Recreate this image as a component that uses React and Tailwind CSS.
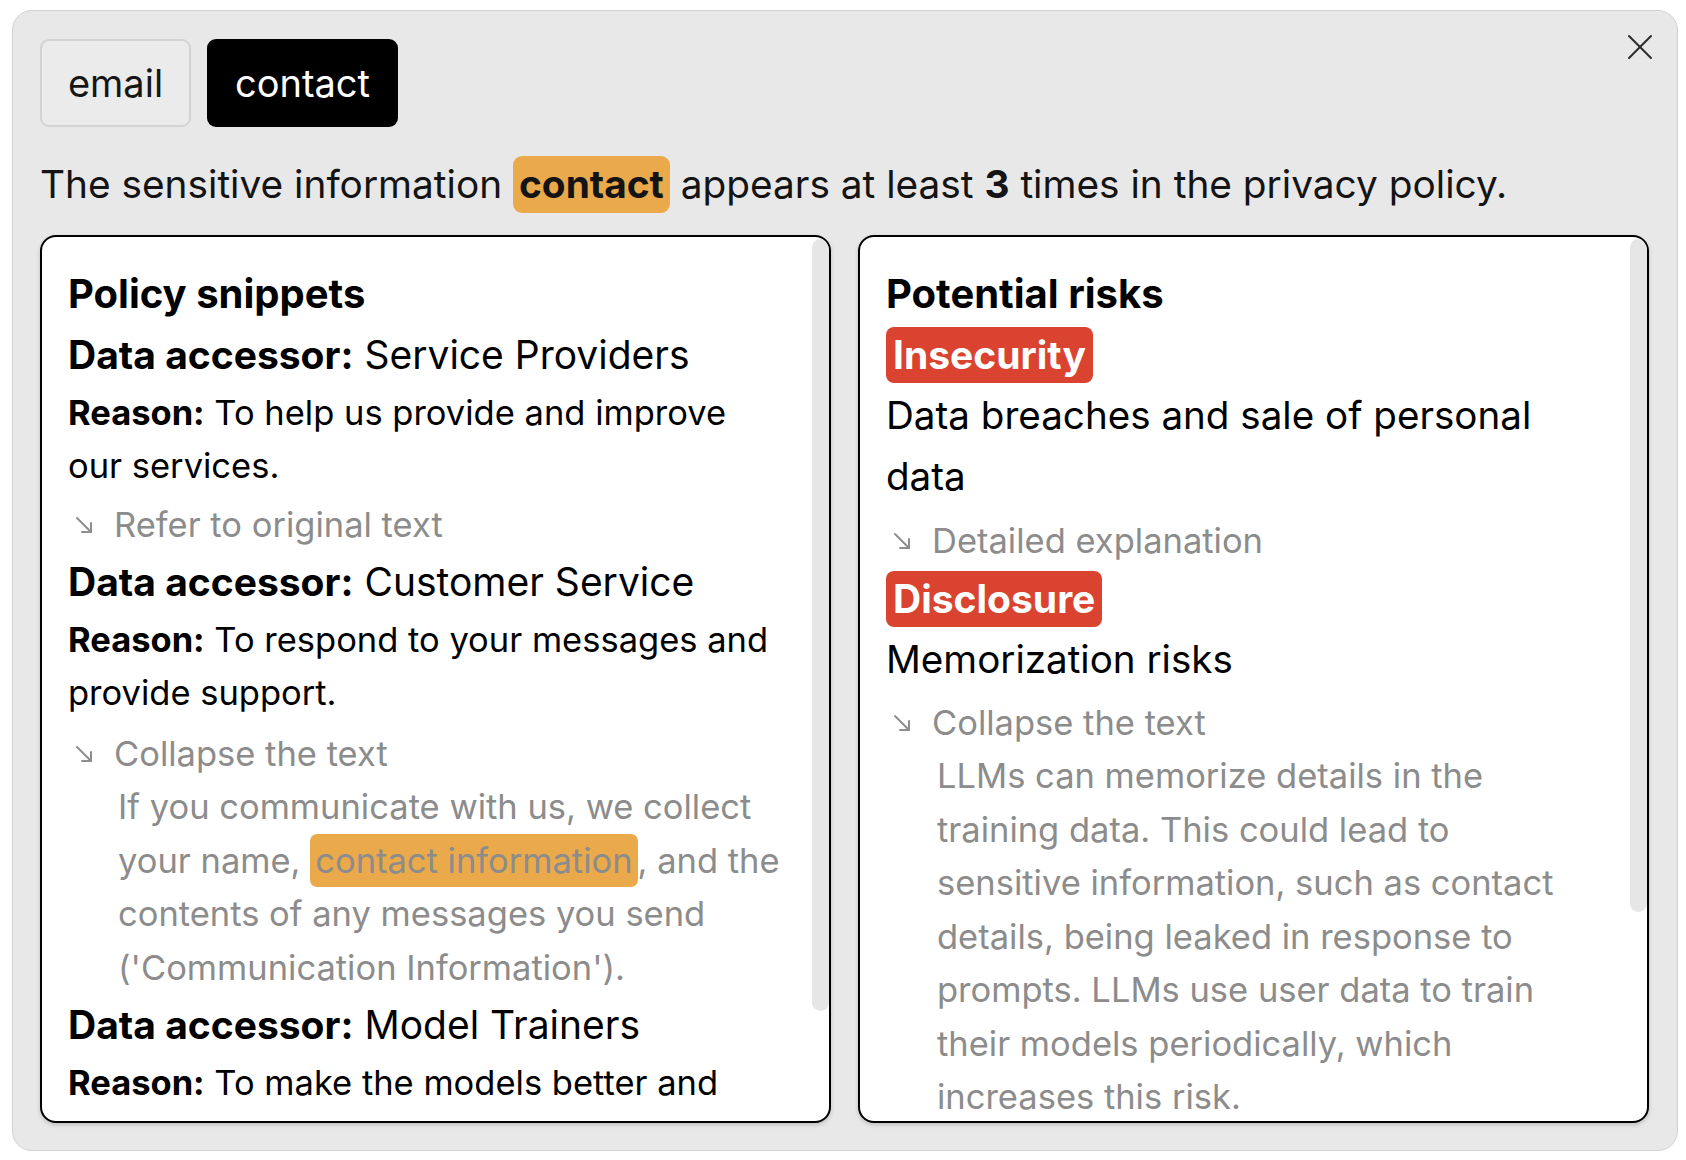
import React from "react";

const Arrow = () => (
  <svg width="22" height="22" viewBox="0 0 22 22" fill="none" stroke="#8e8e8e" strokeWidth="2" strokeLinecap="round" strokeLinejoin="round" className="shrink-0">
    <path d="M4 4 L18 18" />
    <path d="M18 9 L18 18 L9 18" />
  </svg>
);

const Toggle = ({ children, mt = "mt-[6px]" }) => (
  <div className={`flex items-center h-[53px] text-[34.5px] text-[#8c8c8c] whitespace-nowrap ${mt}`}>
    <div className="w-[46px] pl-[5px] flex items-center"><Arrow /></div>
    <span>{children}</span>
  </div>
);

const Scrollbar = ({ h }) => (
  <div className={`absolute right-0 top-[2px] w-[17px] ${h} rounded-[9px] bg-[#e6e6e6]`} />
);

export default function App() {
  return (
    <div className="w-[1686px] h-[1160px] bg-white relative overflow-hidden [font-family:Inter,'Noto_Sans',sans-serif] text-black">
      <div className="absolute left-[12px] top-[10px] w-[1666px] h-[1141px] rounded-[20px] bg-[#e8e8e8] border border-[#d2d2d2] px-[27px] pt-[28px] flex flex-col">
        <button className="absolute right-[22px] top-[21px] w-[30px] h-[30px] flex items-center justify-center">
          <svg width="28" height="28" viewBox="0 0 28 28" stroke="#2a2a2a" strokeWidth="2" strokeLinecap="round">
            <path d="M3 3 L25 25" />
            <path d="M25 3 L3 25" />
          </svg>
        </button>

        <div className="flex gap-[16px] h-[88px]">
          <div className="w-[151px] h-[88px] rounded-[9px] border-2 border-[#d3d3d3] bg-[#ebebeb] flex items-center justify-center text-[38px] text-[#161616]">email</div>
          <div className="w-[191px] h-[88px] rounded-[9px] bg-black flex items-center justify-center text-[38px] text-white">contact</div>
        </div>

        <div className="mt-[29px] h-[57px] flex items-center text-[38.8px] text-[#141414] whitespace-nowrap">
          <span>The sensitive information&nbsp;</span>
          <span className="bg-[#eaa94b] rounded-[9px] px-[6px] h-[57px] flex items-center font-bold">contact</span>
          <span>&nbsp;appears at least&nbsp;<b>3</b>&nbsp;times in the privacy policy.</span>
        </div>

        <div className="mt-[22px] flex gap-[27px]">
          {/* Left panel */}
          <div className="relative w-[791px] h-[888px] bg-white border-2 border-black rounded-[16px] overflow-hidden shadow-[0_2px_4px_rgba(0,0,0,0.18)]">
            <Scrollbar h="h-[772px]" />
            <div className="pl-[26px] pt-[27px] pr-[30px]">
              <div className="text-[40px] font-bold leading-[60px]">Policy snippets</div>

              <div className="text-[39px] leading-[62px] whitespace-nowrap"><b>Data accessor:</b> Service Providers</div>
              <div className="text-[34.5px] leading-[53px] whitespace-nowrap"><b>Reason:</b> To help us provide and improve<br />our services.</div>
              <Toggle>Refer to original text</Toggle>

              <div className="text-[39px] leading-[62px] whitespace-nowrap"><b>Data accessor:</b> Customer Service</div>
              <div className="text-[34.5px] leading-[53px] whitespace-nowrap"><b>Reason:</b> To respond to your messages and<br />provide support.</div>
              <Toggle mt="mt-[8px]">Collapse the text</Toggle>
              <div className="pl-[50px] text-[34.5px] leading-[53.5px] text-[#8c8c8c] whitespace-nowrap">
                If you communicate with us, we collect<br />
                your name, <span className="bg-[#eaa94b] rounded-[7px] px-[5px] py-[6px]">contact information</span>, and the<br />
                contents of any messages you send<br />
                ('Communication Information').
              </div>

              <div className="text-[39px] leading-[62px] whitespace-nowrap"><b>Data accessor:</b> Model Trainers</div>
              <div className="text-[34.5px] leading-[53px] whitespace-nowrap"><b>Reason:</b> To make the models better and</div>
            </div>
          </div>

          {/* Right panel */}
          <div className="relative w-[791px] h-[888px] bg-white border-2 border-black rounded-[16px] overflow-hidden shadow-[0_2px_4px_rgba(0,0,0,0.18)]">
            <Scrollbar h="h-[673px]" />
            <div className="pl-[26px] pt-[27px] pr-[30px]">
              <div className="text-[40px] font-bold leading-[60px]">Potential risks</div>

              <div className="mt-[3px] flex">
                <span className="h-[56px] px-[7px] rounded-[8px] bg-[#d9432f] text-white font-bold text-[39px] flex items-center">Insecurity</span>
              </div>
              <div className="text-[38.6px] leading-[61px] mt-[2px] whitespace-nowrap">Data breaches and sale of personal<br />data</div>
              <Toggle mt="mt-[7px]">Detailed explanation</Toggle>

              <div className="mt-[4px] flex">
                <span className="h-[56px] px-[7px] rounded-[8px] bg-[#d9432f] text-white font-bold text-[39px] flex items-center">Disclosure</span>
              </div>
              <div className="text-[38.6px] leading-[61px] mt-[2px]">Memorization risks</div>
              <Toggle mt="mt-[6px]">Collapse the text</Toggle>
              <div className="pl-[51px] text-[34.5px] leading-[53.5px] text-[#8c8c8c] whitespace-nowrap">
                LLMs can memorize details in the<br />
                training data. This could lead to<br />
                sensitive information, such as contact<br />
                details, being leaked in response to<br />
                prompts. LLMs use user data to train<br />
                their models periodically, which<br />
                increases this risk.
              </div>
            </div>
          </div>
        </div>
      </div>
    </div>
  );
}
